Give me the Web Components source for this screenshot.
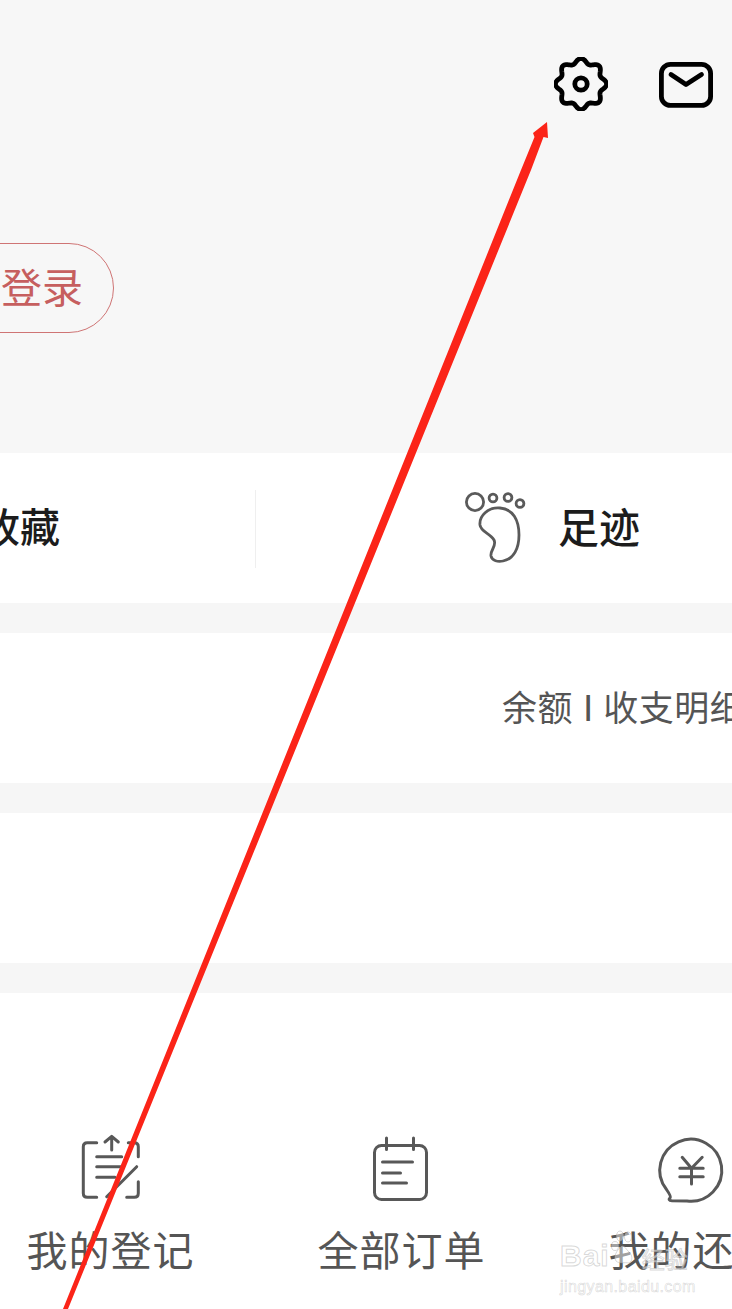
<!DOCTYPE html>
<html lang="zh">
<head>
<meta charset="utf-8">
<title>我的</title>
<style>
  html, body { margin: 0; padding: 0; background: #fff; }
  body { font-family: "Noto Sans CJK SC", "Noto Sans", sans-serif; width: 732px; height: 1309px; overflow: hidden; position: relative; }
</style>
</head>
<body>
<my-page>
  <profile-header></profile-header>
  <quick-links></quick-links>
  <gray-gap></gray-gap>
  <wallet-row></wallet-row>
  <gray-gap></gray-gap>
  <blank-row></blank-row>
  <gray-gap></gray-gap>
  <service-grid>
    <service-item label="我的登记" icon="register"></service-item>
    <service-item label="全部订单" icon="orders"></service-item>
    <service-item label="我的还款" icon="repay"></service-item>
  </service-grid>
</my-page>
<source-watermark></source-watermark>
<red-arrow></red-arrow>

<script>
// small helper, every element below just sets its html in an open shadow root
function shadow(el, html) {
  el.attachShadow({ mode: 'open' }).innerHTML = html
}

// scalloped outline for the settings gear
function gearPath() {
  let d = ''
  for (let i = 0; i < 144; i++) {
    const a = i / 144 * Math.PI * 2
    const r = 23.2 + 2.4 * Math.cos(a * 8)
    const x = 27 + r * Math.sin(a)
    const y = 27 - r * Math.cos(a)
    d += (i ? 'L' : 'M') + x.toFixed(2) + ' ' + y.toFixed(2)
  }
  return d + 'Z'
}

class MyPage extends HTMLElement {
  constructor() {
    super()
    shadow(this, `
      <style>
        :host { display: flex; flex-direction: column; width: 732px; height: 1309px; overflow: hidden; }
      </style>
      <slot></slot>`)
  }
}

class ProfileHeader extends HTMLElement {
  constructor() {
    super()
    shadow(this, `
      <style>
        :host { display: block; height: 453px; background: #f7f7f7; box-sizing: border-box; padding-top: 57px; overflow: hidden; }
        .tools { display: flex; justify-content: flex-end; align-items: flex-start; gap: 51px; padding-right: 19px; height: 54px; }
        svg { display: block; fill: none; stroke: #000; }
        .login {
          box-sizing: border-box; width: 200px; height: 90px; margin: 132px 0 0 -86px;
          border: 1px solid #cf7474; border-radius: 45px;
          display: flex; align-items: center; justify-content: flex-end; padding: 0 30px 6px 0;
          color: #c65f5f; font-size: 41px; line-height: 1;
        }
      </style>
      <div class="tools">
        <svg width="54" height="54" viewBox="0 0 54 54" stroke-width="4.8">
          <path d="${gearPath()}" stroke-linejoin="round"/>
          <circle cx="27" cy="27" r="6.2"/>
        </svg>
        <svg width="54" height="46" viewBox="0 0 54 46" stroke-width="4.8" style="margin-top:5px">
          <rect x="2.4" y="2.4" width="49.2" height="41" rx="9"/>
          <path d="M12 12.5 L27 22.5 L42.5 12.5" stroke-linecap="round" stroke-linejoin="round"/>
        </svg>
      </div>
      <div class="login">登录</div>`)
  }
}

class QuickLinks extends HTMLElement {
  constructor() {
    super()
    shadow(this, `
      <style>
        :host { display: flex; height: 150px; background: #fff; align-items: center; color: #1c1c1c; font-size: 40px; font-weight: 500; line-height: 1; }
        .cell { display: flex; align-items: center; white-space: nowrap; }
        .left { width: 255px; margin: 0 0 6px -20px; }
        .rule { width: 1px; height: 78px; background: #efefef; flex: none; margin: 2px 0 0 20px; }
        .foot { padding-left: 204px; }
        .foot span { font-size: 41px; margin: 0 0 6px -2px; }
        svg { display: block; fill: none; stroke: #5a5a5a; stroke-width: 2.8; margin-right: 30px; flex: none; }
      </style>
      <div class="cell left">收藏</div>
      <div class="rule"></div>
      <div class="cell foot">
        <svg width="70" height="76" viewBox="0 0 70 76">
          <circle cx="15" cy="12" r="8.6"/>
          <circle cx="33" cy="8" r="3.9"/>
          <circle cx="48" cy="7.5" r="3.9"/>
          <circle cx="60" cy="13.5" r="3.9"/>
          <path d="M40 18C28 17 19 26 20 35C21 42 30 43 34 50C37 56 30 60 31 66C32 71 38 72 43 71C54 69 59 58 59 45C59 30 53 19 40 18Z"/>
        </svg>
        <span>足迹</span>
      </div>`)
  }
}

class GrayGap extends HTMLElement {
  constructor() {
    super()
    shadow(this, `<style>:host { display: block; height: 30px; background: #f6f6f6; }</style>`)
  }
}

class WalletRow extends HTMLElement {
  constructor() {
    super()
    shadow(this, `
      <style>
        :host { display: flex; align-items: center; height: 150px; background: #fff; box-sizing: border-box; padding: 0 0 0 502px; color: #555; font-size: 35px; line-height: 1; white-space: nowrap; letter-spacing: .5px; }
        span { margin-bottom: 6px; }
        i { font-style: normal; font-size: 37px; margin: 0 10px 0 10px; letter-spacing: 0; font-family: "Liberation Sans", sans-serif; }
      </style>
      <span>余额</span><i>I</i><span>收支明细</span>`)
  }
}

class BlankRow extends HTMLElement {
  constructor() {
    super()
    shadow(this, `<style>:host { display: block; height: 150px; background: #fff; }</style>`)
  }
}

class ServiceGrid extends HTMLElement {
  constructor() {
    super()
    shadow(this, `
      <style>
        :host { display: grid; grid-template-columns: repeat(3, 291px); margin-left: -35px; padding-top: 140px; background: #fff; flex: 1; }
      </style>
      <slot></slot>`)
  }
}

const SERVICE_ICONS = {
  register: `
    <path d="M18.7 9.7H9.3Q5.3 9.7 5.3 13.7V60.3Q5.3 64.3 9.3 64.3H18.7"/>
    <path d="M50.3 9.7H56.3Q60.3 9.7 60.3 13.7V23.7M60.3 48.7V60.3Q60.3 64.3 56.3 64.3H48.7"/>
    <path d="M33.7 17V3.4M27 9 33.7 3.4 40.3 9"/>
    <path d="M18.7 23.7H43.7M18.7 33.7H43.7M18.7 44.3H37M28.7 63.7 58.7 33.7"/>`,
  orders: `
    <rect x="5.5" y="12.5" width="52" height="54" rx="7"/>
    <path d="M17.5 5V16.5M44.5 5V16.5M13.5 29H43.5M13.5 40H31.5M13.5 50H37.5"/>`,
  repay: `
    <path d="M6.5 56.5A31 31 0 1 1 27 68L12 67.8Q7.5 67.5 10.2 64.5Q11 63 6.5 56.5Z"/>
    <path d="M22.2 24.3 31.5 35.3 42.2 24.3M19.8 35.3H43.2M19.8 43.7H43.2M31.5 35.3V51"/>`
}

class ServiceItem extends HTMLElement {
  connectedCallback() {
    if (this.shadowRoot) return
    shadow(this, `
      <style>
        :host { display: flex; flex-direction: column; align-items: center; color: #555; }
        svg { display: block; width: 66px; height: 70px; fill: none; stroke: #585858; stroke-width: 3; stroke-linecap: round; stroke-linejoin: round; overflow: visible; }
        .label { margin-top: 17px; font-size: 41px; line-height: 56px; letter-spacing: 1px; white-space: nowrap; }
      </style>
      <svg viewBox="0 0 66 70">${SERVICE_ICONS[this.getAttribute('icon')]}</svg>
      <div class="label">${this.getAttribute('label')}</div>`)
  }
}

class SourceWatermark extends HTMLElement {
  constructor() {
    super()
    shadow(this, `
      <style>
        :host { position: absolute; left: 560px; top: 1228px; width: 135px; font-family: "Liberation Sans", sans-serif; color: rgba(255,255,255,.5); }
        .brand { display: flex; align-items: flex-end; height: 46px; font-size: 30px; font-weight: 700; letter-spacing: 1px; line-height: 36px; -webkit-text-stroke: 1px rgba(170,170,170,.45); }
        .brand b { font-family: "Noto Sans CJK SC", sans-serif; font-size: 23px; font-weight: 400; line-height: 32px; letter-spacing: 0; }
        svg { display: block; flex: none; margin: 0 8px 0 0; align-self: flex-start; fill: rgba(255,255,255,.45); stroke: rgba(170,170,170,.45); stroke-width: 1; }
        .site { margin-top: 4px; font-size: 16px; line-height: 18px; letter-spacing: .4px; white-space: nowrap; -webkit-text-stroke: .6px rgba(170,170,170,.45); }
      </style>
      <div class="brand">Bai
        <svg width="24" height="38" viewBox="0 0 24 38">
          <ellipse cx="5" cy="18" rx="3.5" ry="4.5"/>
          <ellipse cx="10" cy="8" rx="3.5" ry="5"/>
          <ellipse cx="18" cy="9" rx="3.5" ry="5"/>
          <path d="M12 18C7 22 3 28 6 33C9 36 15 34 19 35C23 33 23 27 18 23C16 21 15 18 12 18Z"/>
        </svg>
        <b>经验</b></div>
      <div class="site">jingyan.baidu.com</div>`)
  }
}

class RedArrow extends HTMLElement {
  constructor() {
    super()
    shadow(this, `
      <style>
        :host { position: absolute; left: 0; top: 0; width: 732px; height: 1309px; pointer-events: none; }
        svg { display: block; }
      </style>
      <svg width="732" height="1309" viewBox="0 0 732 1309">
        <polygon fill="#fb2418" points="63,1309 521,170 534.5,137 533,133 547,122 548,138 543.5,137 531,170 68,1309"/>
      </svg>`)
  }
}

customElements.define('my-page', MyPage)
customElements.define('profile-header', ProfileHeader)
customElements.define('quick-links', QuickLinks)
customElements.define('gray-gap', GrayGap)
customElements.define('wallet-row', WalletRow)
customElements.define('blank-row', BlankRow)
customElements.define('service-grid', ServiceGrid)
customElements.define('service-item', ServiceItem)
customElements.define('source-watermark', SourceWatermark)
customElements.define('red-arrow', RedArrow)
</script>
</body>
</html>
